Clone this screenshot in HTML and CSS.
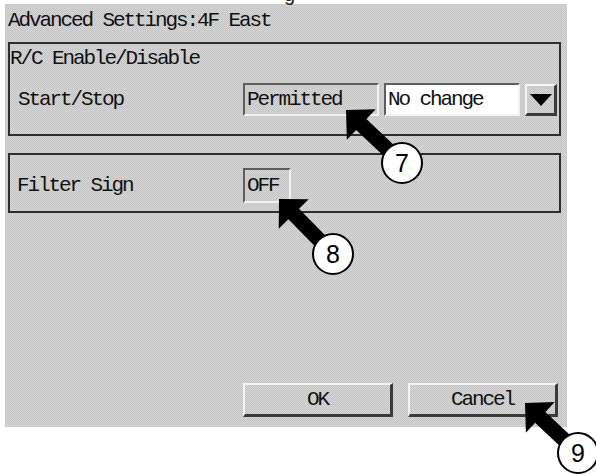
FILE: index.html
```html
<!DOCTYPE html>
<html lang="en">
<head>
  <meta charset="UTF-8">
  <meta name="viewport" content="width=device-width, initial-scale=1.0">
  <title>Advanced Settings</title>
  <link rel="stylesheet" href="styles.css">
</head>
<body>
  <span class="cut-text">g</span>
  <div class="window">
    <div class="title">Advanced Settings:4F East</div>

    <div class="group group-rc">
      <div class="group-title">R/C Enable/Disable</div>
      <div class="row">
        <span class="label">Start/Stop</span>
        <span class="field field-wide">Permitted</span>
        <span class="field field-wide field-white">No change</span>
        <span class="drop-btn">
          <svg width="22" height="12" viewBox="0 0 22 12"><polygon points="0,0 22,0 11,12" fill="#000"/></svg>
        </span>
      </div>
    </div>

    <div class="group group-filter">
      <div class="row">
        <span class="label label-filter">Filter Sign</span>
        <span class="field field-off">OFF</span>
      </div>
    </div>

    <div class="actions">
      <button class="btn">OK</button>
      <button class="btn">Cancel</button>
    </div>
  </div>

  <!-- callout arrows -->
  <svg class="callouts" width="596" height="474" viewBox="0 0 596 474">
    <g transform="translate(346,110) rotate(43.4)">
      <polygon points="0,0 21,-21 21,-7.5 77,-7.5 77,7.5 21,7.5 21,21" fill="#000"/>
    </g>
    <circle cx="402" cy="163" r="20" fill="#fff" stroke="#000" stroke-width="2"/>
    <text x="402" y="172" class="num">7</text>

    <g transform="translate(279,199) rotate(45.5)">
      <polygon points="0,0 21,-21 21,-7.5 77,-7.5 77,7.5 21,7.5 21,21" fill="#000"/>
    </g>
    <circle cx="333" cy="254" r="20" fill="#fff" stroke="#000" stroke-width="2"/>
    <text x="333" y="263" class="num">8</text>

    <g transform="translate(525,403) rotate(43.3)">
      <polygon points="0,0 21,-21 21,-7.5 73,-7.5 73,7.5 21,7.5 21,21" fill="#000"/>
    </g>
    <circle cx="578" cy="453" r="20" fill="#fff" stroke="#000" stroke-width="2"/>
    <text x="578" y="462" class="num">9</text>
  </svg>
</body>
</html>
```

FILE: styles.css
```css
body {
  margin: 0;
  position: relative;
  width: 596px;
  height: 474px;
  overflow: hidden;
  background-color: #fff;
  font-family: "Liberation Mono", "DejaVu Sans Mono", monospace;
  font-size: 21px;
  letter-spacing: -2.1px;
  color: #111;
}

.cut-text {
  position: absolute;
  top: -17px;
  left: 284px;
  font-family: "Liberation Sans", Arial, sans-serif;
  font-size: 20px;
  letter-spacing: 0;
  color: #222;
}

.window {
  margin: 4px 0 0 5px;
  width: 562px;
  height: 423px;
  box-sizing: border-box;
  padding: 6px 6px 10px 3px;
  display: flex;
  flex-direction: column;
  background: repeating-conic-gradient(#c5c5c5 0 25%, #d5d5d5 0 50%) 0 0 / 2px 2px;
}

.title {
  line-height: 21px;
  height: 21px;
  white-space: pre;
}

/* group boxes */
.group {
  border: 2px solid #2e2e2e;
}
.group-rc {
  margin-top: 11px;
  height: 94px;
  box-sizing: border-box;
  padding: 4px 0 18px 0;
}
.group-filter {
  margin-top: 17px;
  height: 60px;
  box-sizing: border-box;
  padding: 13px 0 8px 0;
}
.group-title {
  line-height: 21px;
  height: 21px;
}

.row {
  display: flex;
  align-items: center;
}
.group-rc .row {
  margin-top: 14px;
  height: 33px;
}
.label {
  width: 233px;
  box-sizing: border-box;
  padding-left: 8px;
  line-height: 21px;
}
.label-filter {
  padding-left: 7px;
}

/* sunken fields */
.field {
  box-sizing: border-box;
  height: 33px;
  padding-left: 2px;
  line-height: 29px;
  border-style: solid;
  border-width: 2px;
  border-color: #5e5e5e #f2f2f2 #f2f2f2 #5e5e5e;
}
.field-wide {
  width: 136px;
  margin-right: 5px;
}
.field-white {
  background-color: #fff;
}
.field-off {
  width: 48px;
  height: 35px;
  line-height: 31px;
}

/* raised controls */
.drop-btn,
.btn {
  box-sizing: border-box;
  border-style: solid;
  border-width: 2px 3px 3px 2px;
  border-color: #f4f4f4 #3a3a3a #3a3a3a #f4f4f4;
  background: repeating-conic-gradient(#c5c5c5 0 25%, #d5d5d5 0 50%) 0 0 / 2px 2px;
}
.drop-btn {
  width: 32px;
  height: 32px;
  display: flex;
  align-items: center;
  justify-content: center;
}
.drop-btn svg {
  display: block;
  margin-top: 1px;
}

.actions {
  margin-top: auto;
  display: flex;
  justify-content: flex-end;
  gap: 15px;
  padding-right: 3px;
}
.btn {
  width: 150px;
  height: 34px;
  padding: 0;
  font: inherit;
  letter-spacing: inherit;
  color: #111;
}

/* callouts */
.callouts {
  position: absolute;
  top: 0;
  left: 0;
  pointer-events: none;
}
.num {
  font-family: "Liberation Sans", Arial, sans-serif;
  font-size: 25px;
  letter-spacing: 0;
  text-anchor: middle;
  fill: #000;
}
```
